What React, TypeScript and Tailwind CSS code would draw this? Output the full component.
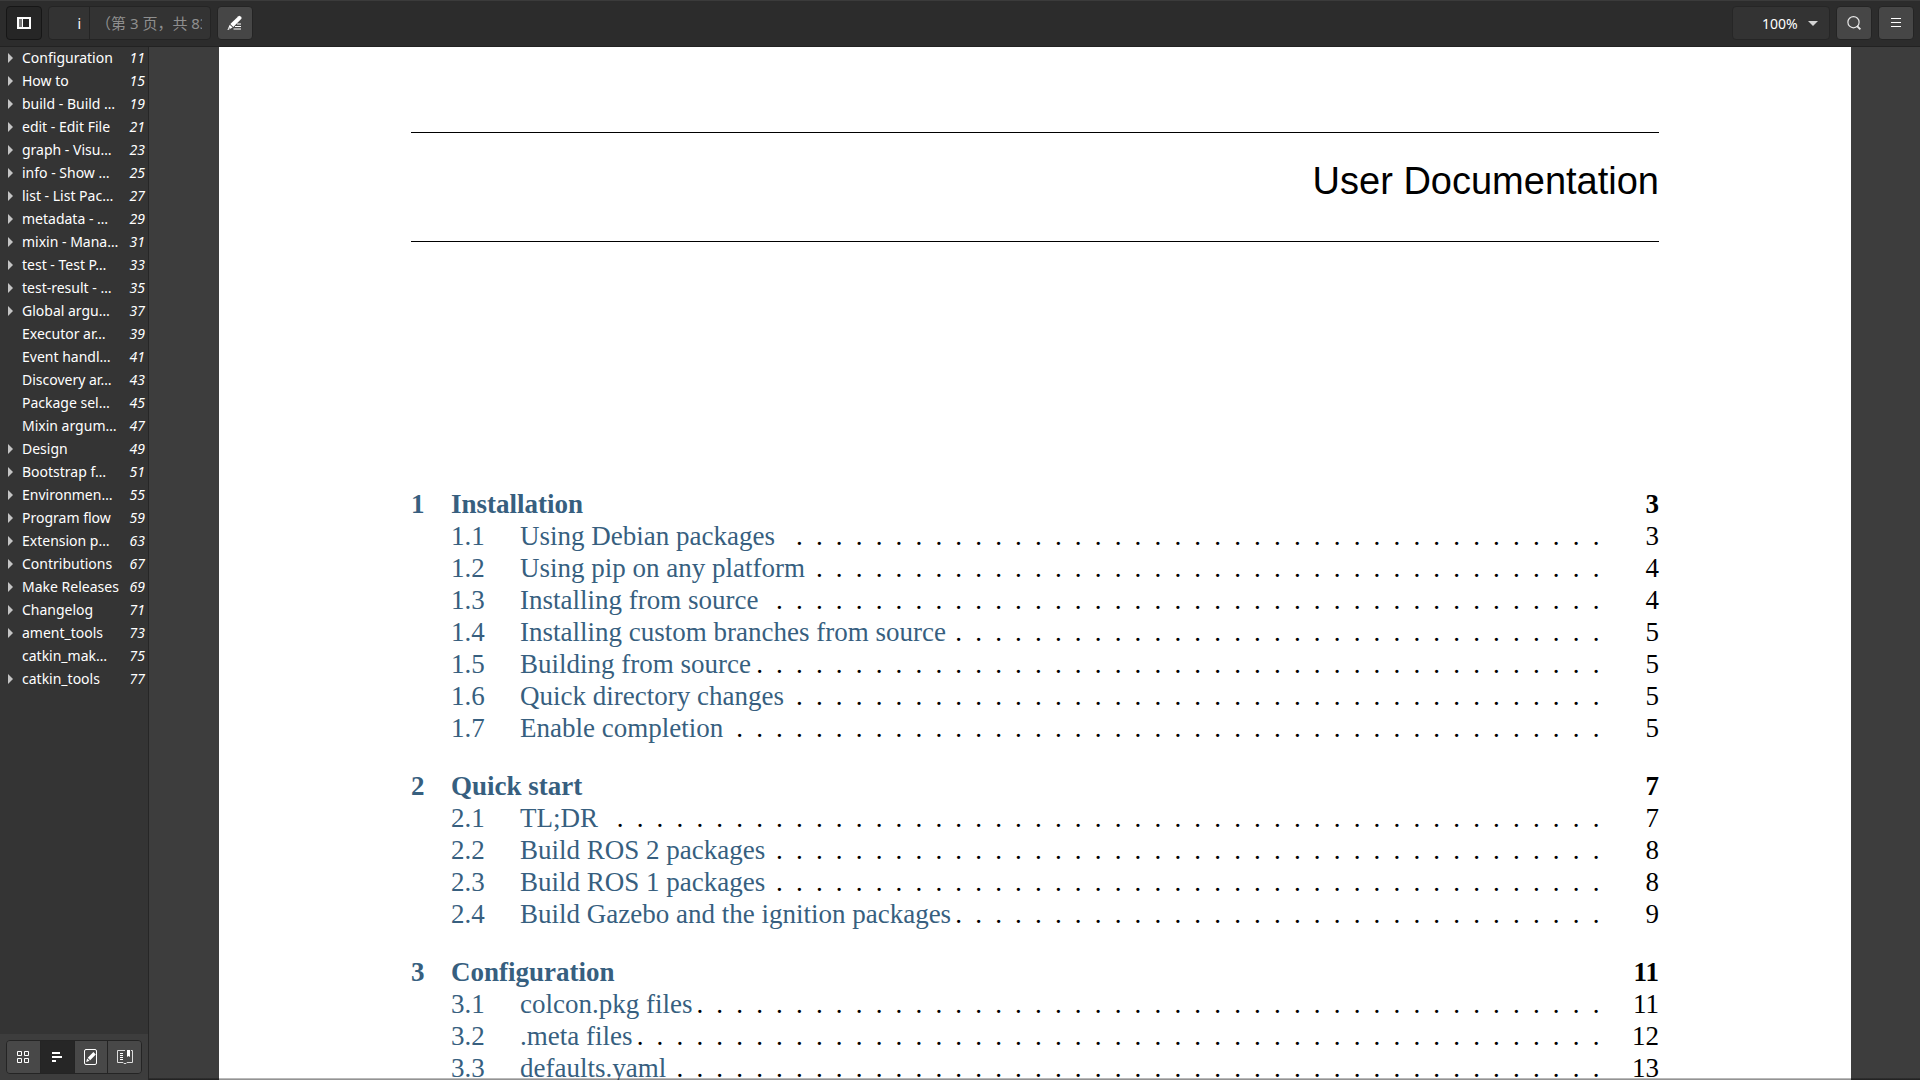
import React, { useState } from 'react';

interface OutlineItem {
    title: string;
    page: number;
    leaf?: boolean;
}

interface TocEntry {
    no: string;
    title: string;
    page: number;
    dots: number;
}

interface TocChapter {
    no: string;
    title: string;
    page: number;
    entries: TocEntry[];
}

const OUTLINE: OutlineItem[] = [
    { title: 'Configuration', page: 11 },
    { title: 'How to', page: 15 },
    { title: 'build - Build …', page: 19 },
    { title: 'edit - Edit File', page: 21 },
    { title: 'graph - Visu…', page: 23 },
    { title: 'info - Show …', page: 25 },
    { title: 'list - List Pac…', page: 27 },
    { title: 'metadata - …', page: 29 },
    { title: 'mixin - Mana…', page: 31 },
    { title: 'test - Test P…', page: 33 },
    { title: 'test-result - …', page: 35 },
    { title: 'Global argu…', page: 37 },
    { title: 'Executor ar…', page: 39, leaf: true },
    { title: 'Event handl…', page: 41, leaf: true },
    { title: 'Discovery ar…', page: 43, leaf: true },
    { title: 'Package sel…', page: 45, leaf: true },
    { title: 'Mixin argum…', page: 47, leaf: true },
    { title: 'Design', page: 49 },
    { title: 'Bootstrap f…', page: 51 },
    { title: 'Environmen…', page: 55 },
    { title: 'Program flow', page: 59 },
    { title: 'Extension p…', page: 63 },
    { title: 'Contributions', page: 67 },
    { title: 'Make Releases', page: 69 },
    { title: 'Changelog', page: 71 },
    { title: 'ament_tools', page: 73 },
    { title: 'catkin_mak…', page: 75, leaf: true },
    { title: 'catkin_tools', page: 77 },
];

const TOC: TocChapter[] = [
    {
        no: '1',
        title: 'Installation',
        page: 3,
        entries: [
            { no: '1.1', title: 'Using Debian packages', page: 3, dots: 41 },
            { no: '1.2', title: 'Using pip on any platform', page: 4, dots: 40 },
            { no: '1.3', title: 'Installing from source', page: 4, dots: 42 },
            { no: '1.4', title: 'Installing custom branches from source', page: 5, dots: 33 },
            { no: '1.5', title: 'Building from source', page: 5, dots: 43 },
            { no: '1.6', title: 'Quick directory changes', page: 5, dots: 41 },
            { no: '1.7', title: 'Enable completion', page: 5, dots: 44 },
        ],
    },
    {
        no: '2',
        title: 'Quick start',
        page: 7,
        entries: [
            { no: '2.1', title: 'TL;DR', page: 7, dots: 50 },
            { no: '2.2', title: 'Build ROS 2 packages', page: 8, dots: 42 },
            { no: '2.3', title: 'Build ROS 1 packages', page: 8, dots: 42 },
            { no: '2.4', title: 'Build Gazebo and the ignition packages', page: 9, dots: 33 },
        ],
    },
    {
        no: '3',
        title: 'Configuration',
        page: 11,
        entries: [
            { no: '3.1', title: 'colcon.pkg files', page: 11, dots: 46 },
            { no: '3.2', title: '.meta files', page: 12, dots: 49 },
            { no: '3.3', title: 'defaults.yaml', page: 13, dots: 47 },
        ],
    },
];

// The leader dots of every row sit on one shared grid
const LEADER_COLUMNS = 60;

const SidebarIcon = () => (
    <svg width="14" height="12" viewBox="0 0 14 12" fill="none">
        <rect x="1" y="1" width="12" height="10" stroke="#fff" strokeWidth="2" />
        <rect x="2" y="2" width="3" height="8" fill="#777" />
        <rect x="5" y="1" width="1" height="10" fill="#fff" />
    </svg>
);

const AnnotateIcon = () => (
    <svg width="16" height="16" viewBox="0 0 16 16" fill="#fff">
        <path d="M11.4 1.2q.9-.8 1.800 0l1 1q.8.9 0 1.800L6.300 12 3.300 9z" />
        <path d="M2.700 9.700 5.600 12.500 1 15q-.6 0-.4-.6zM2.200 12.400l-.6 1.500 1.400-.7z" fillRule="evenodd" />
        <path d="M10 8.500h4v1h-4zM8 11h6v1H8zM6.500 13.500H14v1H6.500z" />
    </svg>
);

const SearchIcon = () => (
    <svg width="16" height="16" viewBox="0 0 16 16" fill="none" stroke="#e8e8e8">
        <circle cx="7.5" cy="7.2" r="5.6" strokeWidth="1.2" />
        <path d="m11 11 3.4 3.4" strokeWidth="1.8" />
    </svg>
);

const MenuIcon = () => (
    <svg width="10" height="10" viewBox="0 0 10 10" fill="#fff">
        <path d="M0 0h10v1H0zM0 4h10v1H0zM0 8h10v1H0z" />
    </svg>
);

const GridIcon = () => (
    <svg width="16" height="16" viewBox="0 0 16 16" fill="none" stroke="#fff">
        <path d="M2.5 2.5h4v4h-4zM9.5 2.5h4v4h-4zM2.5 9.5h4v4h-4zM9.5 9.5h4v4h-4z" />
    </svg>
);

const OutlineIcon = () => (
    <svg width="16" height="16" viewBox="0 0 16 16" fill="#fff">
        <path d="M3 3h8v2H3zM3 7h10v2H3zM3 11h4v2H3z" />
    </svg>
);

const NoteIcon = () => (
    <svg width="16" height="16" viewBox="0 0 16 16" fill="none">
        <rect x="1.5" y="0.5" width="12" height="15" rx="1.5" stroke="#fff" />
        <path d="M10.4 3 12.800 5.400 7.200 11.200 4.700 8.700zM4.100 9.400l2.400 2.400-3.300 1.200z" fill="#fff" />
    </svg>
);

const BookmarkIcon = () => (
    <svg width="16" height="16" viewBox="0 0 16 16" fill="none">
        <path d="M8 1.5H.5v12H6l1 1h2l1-1h5.500v-12H14" stroke="#ddd" />
        <path d="M10 1h3v7l-1.500-1L10 8z" fill="#fff" />
        <path d="M3 4.500h3M3 6.500h3M3 8.500h3M3 10.500h3" stroke="#fff" />
    </svg>
);

const TABS = [
    { id: 'thumbnails', icon: <GridIcon /> },
    { id: 'outline', icon: <OutlineIcon /> },
    { id: 'annotations', icon: <NoteIcon /> },
    { id: 'bookmarks', icon: <BookmarkIcon /> },
];

const Toolbar: React.FC<{ sidebarOpen: boolean; onToggle: () => void }> = ({ sidebarOpen, onToggle }) => {
    const [page, setPage] = useState('i');
    const [zoom, setZoom] = useState('100%');

    return (
        <header className="flex h-[47px] shrink-0 items-start border-t border-b border-t-[#3b3b3b] border-b-[#222] bg-[#2c2c2c] px-1.5 pt-[5px]">
            <button
                aria-label="Side pane"
                aria-pressed={sidebarOpen}
                onClick={onToggle}
                className="flex h-[34px] w-9 items-center justify-center rounded border border-[#161616] bg-[#262626]"
            >
                <SidebarIcon />
            </button>

            <div className="ml-1.5 flex h-[34px] w-[163px] overflow-hidden rounded border border-[#242424] bg-[#333]">
                <input
                    aria-label="Page"
                    value={page}
                    onChange={(e) => setPage(e.target.value)}
                    className="w-[41px] border-r border-[#242424] pr-2 text-right text-white outline-none"
                />
                <input
                    aria-label="Page count"
                    readOnly
                    value="（第 3 页，共 83 页）"
                    className="mr-2 ml-1.5 min-w-0 flex-1 text-[15px] text-[#8f8f8f] outline-none"
                />
            </div>

            <button
                aria-label="Annotate"
                className="ml-1.5 flex h-[34px] w-9 items-center justify-center rounded border border-[#242424] bg-[#464646]"
            >
                <AnnotateIcon />
            </button>

            <div className="relative ml-auto h-[34px] w-[98px] rounded border border-[#262626] bg-[#333]">
                <select
                    aria-label="Zoom"
                    value={zoom}
                    onChange={(e) => setZoom(e.target.value)}
                    className="h-full w-full appearance-none pl-[29px] text-white outline-none"
                >
                    <option>50%</option>
                    <option>100%</option>
                    <option>200%</option>
                </select>
                <svg
                    width="10"
                    height="5"
                    viewBox="0 0 10 5"
                    fill="#d4d4d4"
                    className="pointer-events-none absolute top-3.5 right-[11px]"
                >
                    <path d="M0 0h10L5 5z" />
                </svg>
            </div>

            <button
                aria-label="Search"
                className="ml-1.5 flex h-[34px] w-9 items-center justify-center rounded border border-[#242424] bg-[#464646]"
            >
                <SearchIcon />
            </button>
            <button
                aria-label="Menu"
                className="ml-1.5 flex h-[34px] w-9 items-center justify-center rounded border border-[#242424] bg-[#464646]"
            >
                <MenuIcon />
            </button>
        </header>
    );
};

const Sidebar: React.FC = () => {
    const [tab, setTab] = useState('outline');

    return (
        <aside className="flex w-[149px] shrink-0 flex-col border-r border-[#262626] bg-[#343434]">
            <ul className="min-h-0 flex-1 overflow-hidden text-white">
                {OUTLINE.map((item) => (
                    <li key={item.page} className="flex h-[23px] items-center pr-[3px] pb-0.5 pl-2">
                        <span className="w-3.5 shrink-0">
                            {!item.leaf && (
                                <button aria-label={`Expand ${item.title}`} className="block">
                                    <svg width="5" height="10" viewBox="0 0 5 10" fill="#c4c4c4">
                                        <path d="M0 0l5 5-5 5z" />
                                    </svg>
                                </button>
                            )}
                        </span>
                        <a href={`#page-${item.page}`} className="flex-1 whitespace-nowrap">
                            {item.title}
                        </a>
                        <span className="italic">{item.page}</span>
                    </li>
                ))}
            </ul>

            {/* View switcher */}
            <div className="bg-[#3d3d3d] p-1.5">
                <div className="flex h-[34px] w-[136px] divide-x divide-[#242424] overflow-hidden rounded border border-[#242424]">
                    {TABS.map(({ id, icon }) => (
                        <button
                            key={id}
                            aria-label={id}
                            onClick={() => setTab(id)}
                            className={`flex flex-1 items-center justify-center ${tab === id ? 'bg-[#262626]' : 'bg-[#484848]'}`}
                        >
                            {icon}
                        </button>
                    ))}
                </div>
            </div>
        </aside>
    );
};

const TocRow: React.FC<{ entry: TocEntry }> = ({ entry }) => (
    <li className="flex">
        <div className="grid flex-1 grid-cols-[repeat(60,1fr)]">
            <a
                href={`#section-${entry.no}`}
                className="flex min-w-0 pl-10 whitespace-nowrap text-[#375f7f]"
                style={{ gridColumn: `span ${LEADER_COLUMNS - entry.dots}` }}
            >
                <span className="w-[69px] shrink-0">{entry.no}</span>
                {entry.title}
            </a>
            {Array.from({ length: entry.dots }, (_, i) => (
                <span key={i} aria-hidden="true" className="min-w-0 text-center">
                    .
                </span>
            ))}
        </div>
        <span className="w-[53px] text-right">{entry.page}</span>
    </li>
);

const DocumentPage: React.FC = () => (
    <article className="min-w-0 flex-1 bg-white px-48 pt-[85px] text-black">
        <h1 className="border-t border-b border-black pt-6 pb-9 text-right font-['Liberation_Sans',sans-serif] text-[38px] leading-12">
            User Documentation
        </h1>

        <ol className="mt-[246px] flex flex-col gap-[26px] font-['Liberation_Serif',serif] text-[27px] leading-8">
            {TOC.map((chapter) => (
                <li key={chapter.no}>
                    <div className="flex font-bold">
                        <a href={`#chapter-${chapter.no}`} className="flex flex-1 text-[#375f7f]">
                            <span className="w-10">{chapter.no}</span>
                            {chapter.title}
                        </a>
                        <span>{chapter.page}</span>
                    </div>
                    <ol>
                        {chapter.entries.map((entry) => (
                            <TocRow key={entry.no} entry={entry} />
                        ))}
                    </ol>
                </li>
            ))}
        </ol>
    </article>
);

export default function App() {
    const [sidebarOpen, setSidebarOpen] = useState(true);

    return (
        <div className="flex h-screen flex-col overflow-hidden bg-[#3d3d3d] font-['Noto_Sans','Noto_Sans_CJK_SC',sans-serif] text-[14px] leading-[23px]">
            <Toolbar sidebarOpen={sidebarOpen} onToggle={() => setSidebarOpen(!sidebarOpen)} />
            <div className="flex min-h-0 flex-1">
                {sidebarOpen && <Sidebar />}
                <main className="relative flex min-w-0 flex-1 overflow-hidden pr-[69px] pl-[70px]">
                    <DocumentPage />
                    {/* Window edge */}
                    <div className="absolute inset-x-0 bottom-0 h-0.5 bg-linear-to-b from-black/20 to-black/50" />
                </main>
            </div>
        </div>
    );
}
